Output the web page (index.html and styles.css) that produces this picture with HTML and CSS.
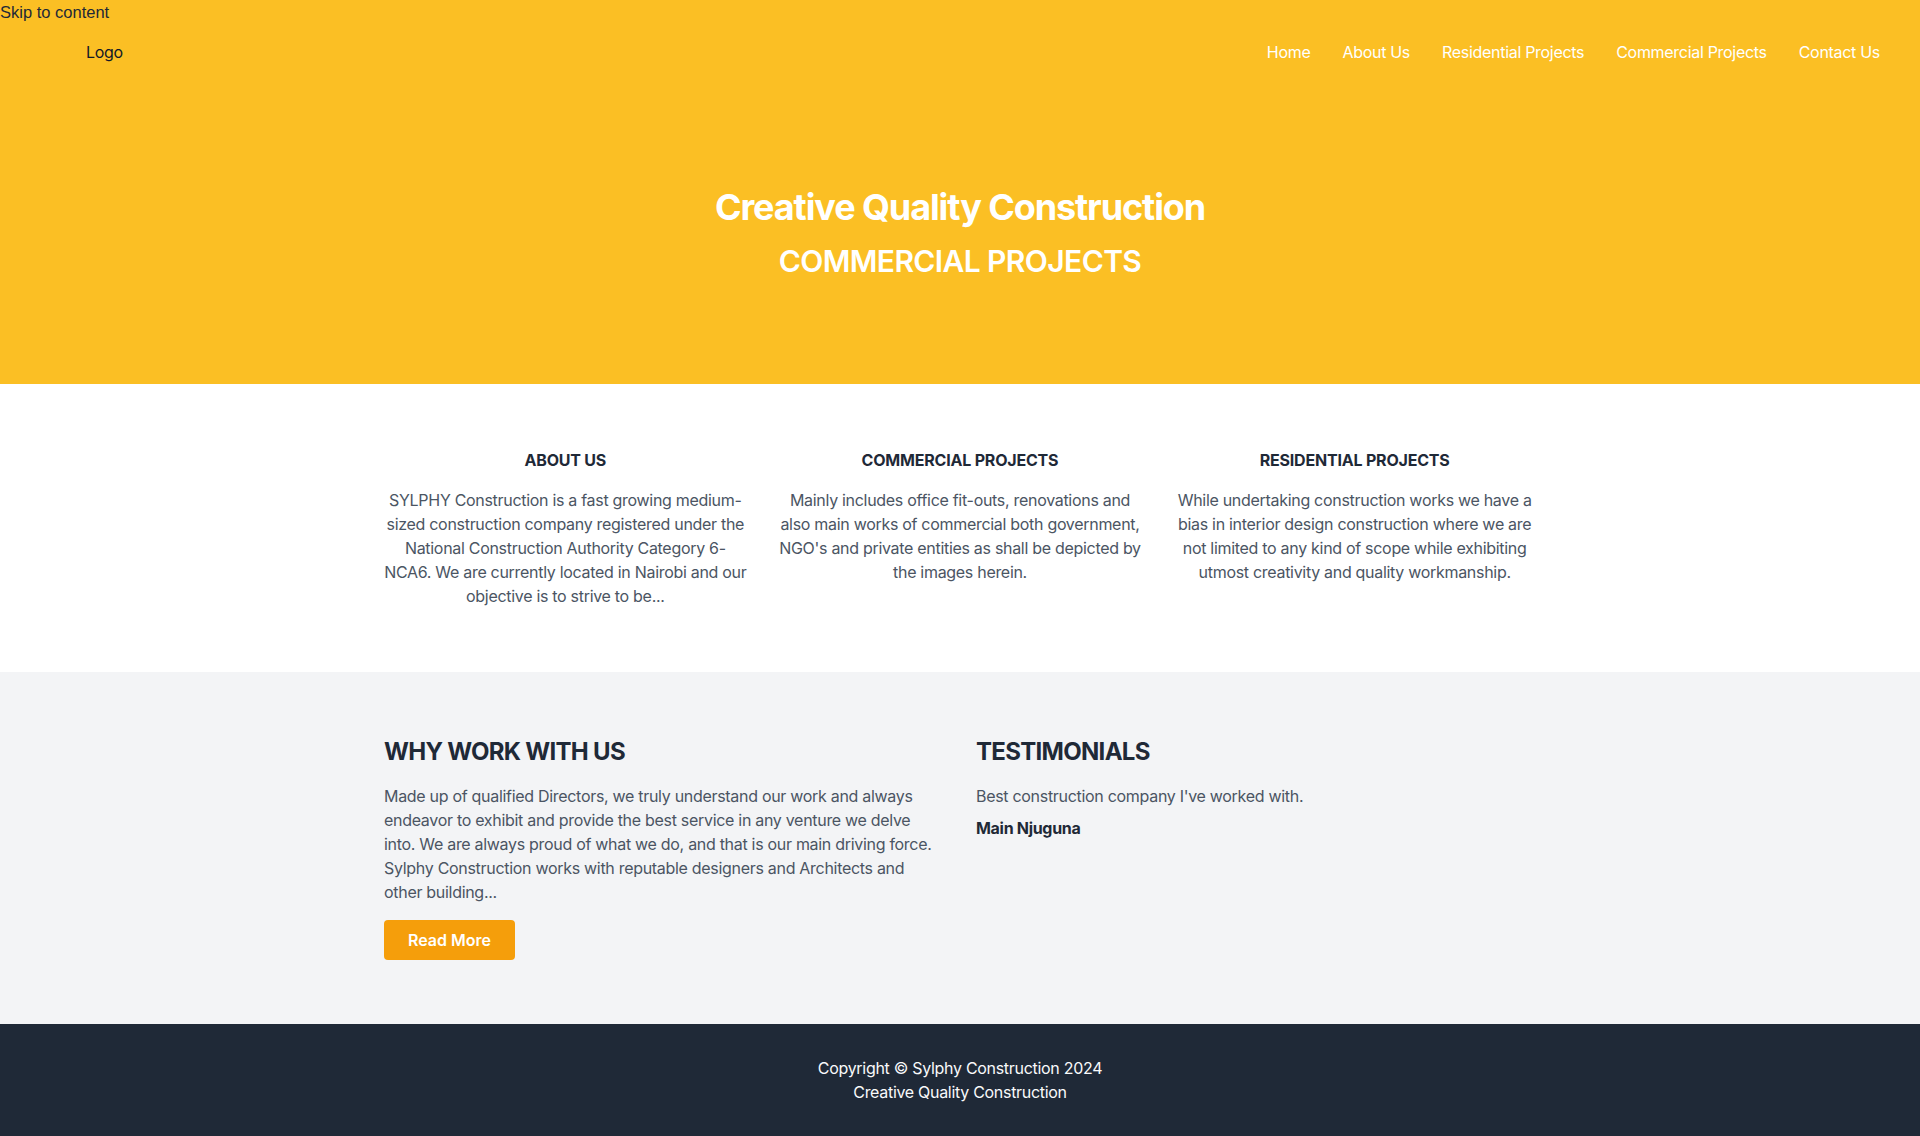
FILE: index.html
```html
<!DOCTYPE html>
<html lang="en">
<head>
<meta charset="utf-8">
<title>Sylphy Construction</title>
<link rel="stylesheet" href="styles.css">
</head>
<body>
<header class="header">
  <a class="skip" href="#content">Skip to content</a>
  <nav class="nav">
    <div class="logo">Logo</div>
    <ul class="menu">
      <li><a href="#">Home</a></li>
      <li><a href="#">About Us</a></li>
      <li><a href="#">Residential Projects</a></li>
      <li><a href="#">Commercial Projects</a></li>
      <li><a href="#">Contact Us</a></li>
    </ul>
  </nav>
  <div class="hero">
    <h1 class="hero-title">Creative Quality Construction</h1>
    <h2 class="hero-sub">COMMERCIAL PROJECTS</h2>
  </div>
</header>
<main id="content">
  <section class="intro">
    <div class="container three">
      <div class="col">
        <h3 class="col-title">ABOUT US</h3>
        <p class="col-text">SYLPHY Construction is a fast growing medium-sized construction company registered under the National Construction Authority Category 6-NCA6. We are currently located in Nairobi and our objective is to strive to be...</p>
      </div>
      <div class="col">
        <h3 class="col-title">COMMERCIAL PROJECTS</h3>
        <p class="col-text">Mainly includes office fit-outs, renovations and also main works of commercial both government, NGO's and private entities as shall be depicted by the images herein.</p>
      </div>
      <div class="col">
        <h3 class="col-title">RESIDENTIAL PROJECTS</h3>
        <p class="col-text">While undertaking construction works we have a bias in interior design construction where we are not limited to any kind of scope while exhibiting utmost creativity and quality workmanship.</p>
      </div>
    </div>
  </section>
  <section class="why">
    <div class="container two">
      <div>
        <h2 class="sec-title">WHY WORK WITH US</h2>
        <p class="sec-text">Made up of qualified Directors, we truly understand our work and always endeavor to exhibit and provide the best service in any venture we delve into. We are always proud of what we do, and that is our main driving force. Sylphy Construction works with reputable designers and Architects and other building...</p>
        <a class="btn" href="#">Read More</a>
      </div>
      <div>
        <h2 class="sec-title">TESTIMONIALS</h2>
        <p class="sec-text">Best construction company I've worked with.</p>
        <p class="author">Main Njuguna</p>
      </div>
    </div>
  </section>
</main>
<footer class="footer">
  <p>Copyright © Sylphy Construction 2024</p>
  <p>Creative Quality Construction</p>
</footer>
</body>
</html>
```
FILE: styles.css
```css
* { box-sizing: border-box; }
html, body { margin: 0; padding: 0; }
body {
  font-family: Inter, "Noto Sans", sans-serif;
  font-size: 16px;
  line-height: 24px;
  letter-spacing: -0.3px;
  color: #1f2937;
}
h1, h2, h3, p, ul { margin: 0; padding: 0; }
a { text-decoration: none; color: inherit; }

.header { background: #fbbf24; }
.skip {
  display: block;
  width: max-content;
  color: #1f2937;
  font-size: 16.5px;
  line-height: 25px;
  font-family: "Liberation Sans", Arial, sans-serif;
  letter-spacing: 0;
}
.nav {
  display: flex;
  align-items: center;
  justify-content: space-between;
  padding: 15px 40px 16px 86px;
}
.logo { color: #111827; }
.menu { list-style: none; display: flex; gap: 32px; }
.menu a { color: #ffffff; }

.hero { text-align: center; color: #fff; padding: 107px 0 105px; }
.hero-title { font-size: 36px; line-height: 40px; font-weight: 700; margin-bottom: 16px; letter-spacing: -1.1px; }
.hero-sub { font-size: 30px; line-height: 36px; font-weight: 600; letter-spacing: -0.6px; }

.container { max-width: 1152px; margin: 0 auto; display: grid; gap: 32px; }
.three { grid-template-columns: repeat(3, 1fr); }
.two { grid-template-columns: repeat(2, 1fr); }

.intro { background: #fff; padding: 64px 0 64px; }
.col { text-align: center; }
.col-title { font-size: 16px; line-height: 24px; font-weight: 700; color: #1f2937; margin-bottom: 16px; letter-spacing: -0.2px; }
.col-text { color: #4b5563; }

.why { background: #f3f4f6; padding: 64px 0 64px; }
.sec-title { font-size: 24px; line-height: 32px; font-weight: 700; color: #1f2937; margin-bottom: 16px; letter-spacing: -0.7px; }
.sec-text { color: #4b5563; }
.btn {
  display: inline-block;
  margin-top: 16px;
  background: #f59e0b;
  color: #fff;
  font-weight: 600;
  letter-spacing: 0;
  padding: 8px 24px;
  border-radius: 4px;
}
.author { margin-top: 8px; font-weight: 700; color: #1f2937; }

.footer { background: #1f2937; color: #f9fafb; text-align: center; padding: 32px 0; }
```
